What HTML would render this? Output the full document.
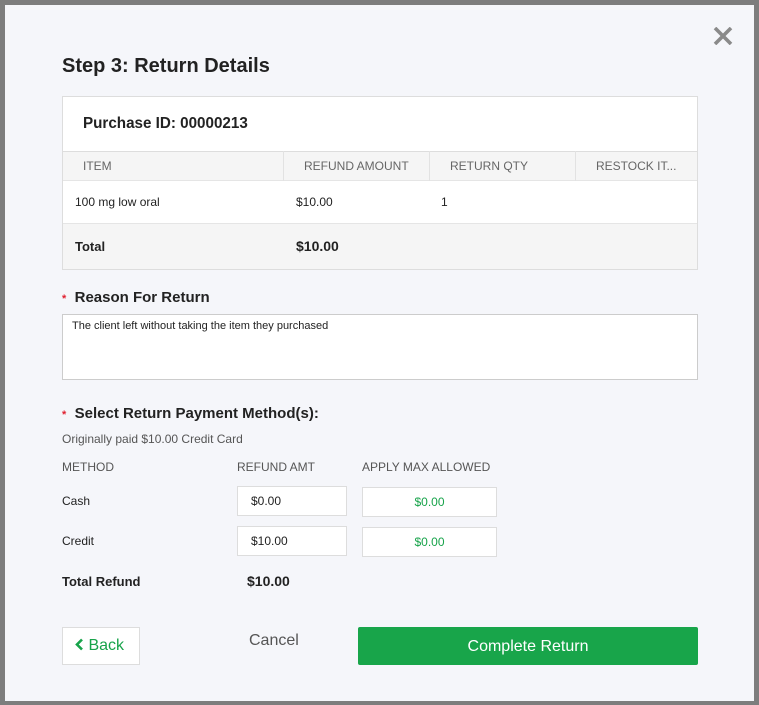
<!DOCTYPE html>
<html><head><style>
*{box-sizing:border-box;margin:0;padding:0}
body{width:759px;height:705px;background:#7d7d7d;font-family:"Liberation Sans",sans-serif;position:relative;overflow:hidden;color:#222}
.m{position:absolute;left:5px;top:5px;width:749px;height:696px;background:#f5f6fa}
.a{position:absolute;white-space:nowrap}
.box{position:absolute;background:#fff;border:1px solid #ddd}
.g{color:#17a34a}
.req{color:#e0202f;font-size:11px}
</style></head><body>
<div class="m"></div>
<svg class="a" style="left:713px;top:27px" width="20" height="18" viewBox="0 0 20 18"><path d="M2 1L18 17M18 1L2 17" stroke="#8a8a8a" stroke-width="3.6"/></svg>
<div class="a" style="left:62px;top:55px;font-size:20px;font-weight:bold;color:#222">Step 3: Return Details</div>
<div class="box" style="left:62px;top:96px;width:636px;height:174px"></div>
<div class="a" style="left:83px;top:115px;font-size:16px;color:#222;font-weight:bold;transform:scaleX(0.95);transform-origin:left">Purchase ID: 00000213</div>
<div class="a" style="left:63px;top:151px;width:634px;height:30px;background:#f5f5f5;border-top:1px solid #ddd;border-bottom:1px solid #e5e5e5"></div>
<div class="a" style="left:283px;top:151px;width:1px;height:30px;background:#e2e2e2"></div>
<div class="a" style="left:429px;top:151px;width:1px;height:30px;background:#e2e2e2"></div>
<div class="a" style="left:575px;top:151px;width:1px;height:30px;background:#e2e2e2"></div>
<div class="a" style="left:83px;top:159px;font-size:12px;color:#666">ITEM</div>
<div class="a" style="left:304px;top:159px;font-size:12px;color:#666">REFUND AMOUNT</div>
<div class="a" style="left:450px;top:159px;font-size:12px;color:#666">RETURN QTY</div>
<div class="a" style="left:596px;top:159px;font-size:12px;color:#666">RESTOCK IT...</div>
<div class="a" style="left:75px;top:195px;font-size:12px">100 mg low oral</div>
<div class="a" style="left:296px;top:195px;font-size:12px">$10.00</div>
<div class="a" style="left:441px;top:195px;font-size:12px">1</div>
<div class="a" style="left:63px;top:223px;width:634px;height:46px;background:#f5f5f5;border-top:1px solid #e5e5e5"></div>
<div class="a" style="left:75px;top:239px;font-size:13px;font-weight:bold">Total</div>
<div class="a" style="left:296px;top:238px;font-size:14px;font-weight:bold">$10.00</div>
<div class="a" style="left:62px;top:289px;font-size:15px;font-weight:bold"><span class="req">*</span>&nbsp; Reason For Return</div>
<div class="box" style="left:62px;top:314px;width:636px;height:66px;border-color:#ccc"></div>
<div class="a" style="left:72px;top:320px;font-size:11px">The client left without taking the item they purchased</div>
<div class="a" style="left:62px;top:405px;font-size:15px;font-weight:bold"><span class="req">*</span>&nbsp; Select Return Payment Method(s):</div>
<div class="a" style="left:62px;top:432px;font-size:12px;color:#555">Originally paid $10.00 Credit Card</div>
<div class="a" style="left:62px;top:460px;font-size:12px;color:#555">METHOD</div>
<div class="a" style="left:237px;top:460px;font-size:12px;color:#555">REFUND AMT</div>
<div class="a" style="left:362px;top:460px;font-size:12px;color:#555">APPLY MAX ALLOWED</div>
<div class="a" style="left:62px;top:494px;font-size:12px">Cash</div>
<div class="a" style="left:62px;top:534px;font-size:12px">Credit</div>
<div class="box" style="left:237px;top:486px;width:110px;height:30px"></div>
<div class="a" style="left:251px;top:494px;font-size:12px">$0.00</div>
<div class="box" style="left:237px;top:526px;width:110px;height:30px"></div>
<div class="a" style="left:251px;top:534px;font-size:12px">$10.00</div>
<div class="box g" style="left:362px;top:487px;width:135px;height:30px;font-size:12px;text-align:center;line-height:28px">$0.00</div>
<div class="box g" style="left:362px;top:527px;width:135px;height:30px;font-size:12px;text-align:center;line-height:28px">$0.00</div>
<div class="a" style="left:62px;top:574px;font-size:13px;font-weight:bold">Total Refund</div>
<div class="a" style="left:247px;top:573px;font-size:14px;font-weight:bold">$10.00</div>
<div class="box g" style="left:62px;top:627px;width:78px;height:38px;font-size:16px;line-height:36px;padding-left:12px"><svg width="9" height="13" viewBox="0 0 9 13" style="vertical-align:-1px"><path d="M7 1.5L2 6.5L7 11.5" stroke="#17a34a" stroke-width="2.6" fill="none"/></svg> Back</div>
<div class="a" style="left:249px;top:632px;font-size:16px;color:#555">Cancel</div>
<div class="a" style="left:358px;top:627px;width:340px;height:38px;background:#18a54a;border-radius:2px;color:#fff;font-size:16px;text-align:center;line-height:40px">Complete Return</div>
</body></html>
